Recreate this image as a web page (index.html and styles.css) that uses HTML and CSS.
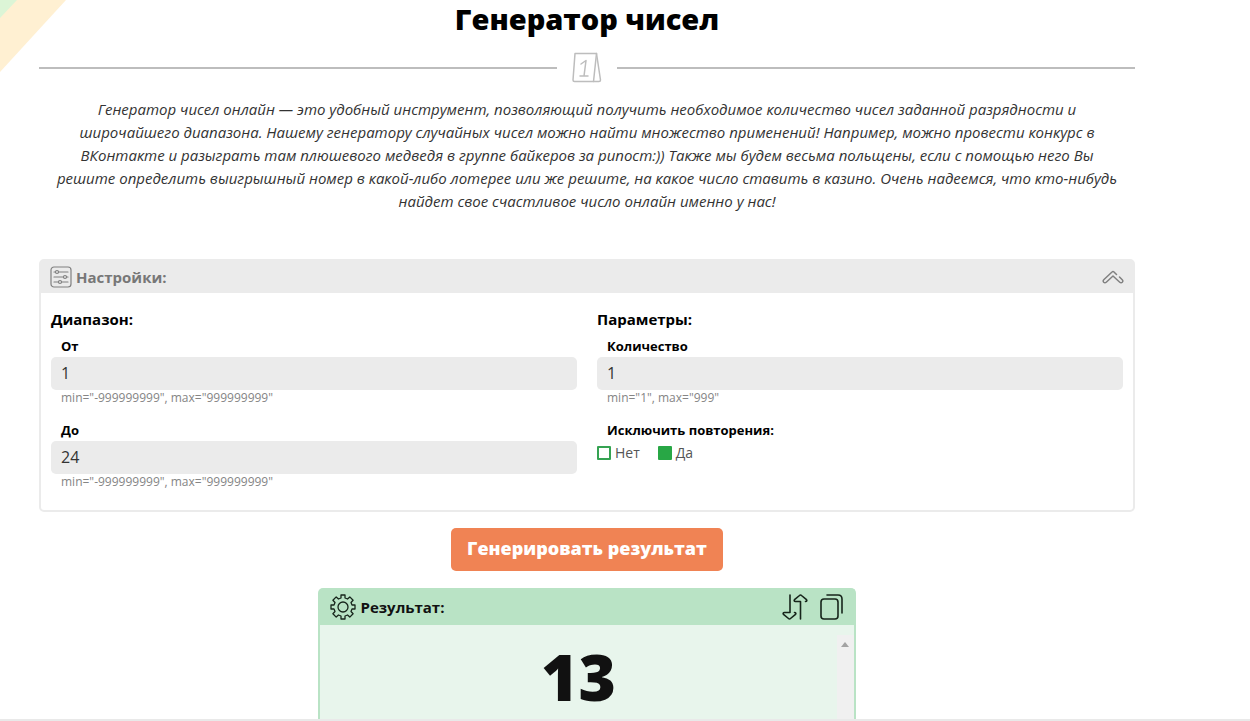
FILE: index.html
```html
<!DOCTYPE html>
<html lang="ru">
<head>
<meta charset="utf-8">
<title>Генератор чисел</title>
<link rel="stylesheet" href="styles.css">
</head>
<body>
<svg class="corner" viewBox="0 0 66 72" aria-hidden="true">
  <path d="M0 0H66L0 72Z" fill="#fff0d2"/>
  <path d="M0 0H17L0 18Z" fill="#dcf5d6"/>
</svg>
<main class="page">
  <h1 class="title">Генератор чисел</h1>
  <div class="divider">
    <svg class="divider-icon" viewBox="0 0 30 32" fill="none" stroke="#bdbdbd" stroke-width="1.5" stroke-linecap="round" stroke-linejoin="round" aria-hidden="true">
      <path d="M3 1.5H24.5L21.5 29.5H2.5Q1 29.5 1 28Z"/>
      <path d="M24.5 1.5L28.5 28Q28.5 29.5 27 29.5H21.5"/>
      <path d="M9 12L14 8.5L12 24M8 24H16"/>
    </svg>
  </div>
  <p class="intro">Генератор чисел онлайн — это удобный инструмент, позволяющий получить необходимое количество чисел заданной разрядности и<br>широчайшего диапазона. Нашему генератору случайных чисел можно найти множество применений! Например, можно провести конкурс в<br>ВКонтакте и разыграть там плюшевого медведя в группе байкеров за рипост:)) Также мы будем весьма польщены, если с помощью него Вы<br>решите определить выигрышный номер в какой-либо лотерее или же решите, на какое число ставить в казино. Очень надеемся, что кто-нибудь<br>найдет свое счастливое число онлайн именно у нас!</p>

  <form class="form">
    <section class="settings">
      <header class="settings-head">
        <svg class="icon-settings" viewBox="0 0 22 22" fill="none" stroke="#808080" stroke-width="1.2" aria-hidden="true">
          <rect x="1" y="1" width="20" height="20" rx="3"/>
          <path d="M4 6H5.500M8.500 6H18M4 11H13.500M16.500 11H18M4 16H8.500M11.500 16H18" stroke-linecap="round"/>
          <circle cx="7" cy="6" r="1.500"/><circle cx="15" cy="11" r="1.500"/><circle cx="10" cy="16" r="1.500"/>
        </svg>
        <h2 class="settings-title">Настройки:</h2>
        <button class="icon-button" type="button" aria-label="Свернуть">
          <svg class="icon-chevron" viewBox="0 0 22 14" fill="none" stroke="#808080" stroke-width="1.5" stroke-linecap="round" stroke-linejoin="round" aria-hidden="true">
            <path d="M14.500 4.500L12 2Q11 1 10 2L2 9.500Q.5 11 1.700 12.300Q3 13.400 4.500 12L11 6L17.500 12Q19 13.400 20.300 12.300Q21.500 11 20 9.500L17.500 7"/>
          </svg>
        </button>
      </header>
      <div class="settings-body">
        <div class="column">
          <h3 class="group-title">Диапазон:</h3>
          <div class="field">
            <label class="label" for="from">От</label>
            <input class="input" id="from" type="text" inputmode="numeric" value="1">
            <small class="hint">min="-999999999", max="999999999"</small>
          </div>
          <div class="field">
            <label class="label" for="to">До</label>
            <input class="input" id="to" type="text" inputmode="numeric" value="24">
            <small class="hint">min="-999999999", max="999999999"</small>
          </div>
        </div>
        <div class="column">
          <h3 class="group-title">Параметры:</h3>
          <div class="field">
            <label class="label" for="count">Количество</label>
            <input class="input" id="count" type="text" inputmode="numeric" value="1">
            <small class="hint">min="1", max="999"</small>
          </div>
          <div class="field" role="radiogroup" aria-labelledby="unique">
            <span class="label" id="unique">Исключить повторения:</span>
            <div class="options">
              <label class="option"><input class="radio" type="radio" name="unique">Нет</label>
              <label class="option"><input class="radio" type="radio" name="unique" checked>Да</label>
            </div>
          </div>
        </div>
      </div>
    </section>
    <button class="generate" type="button">Генерировать результат</button>
  </form>

  <section class="result">
    <header class="result-head">
      <svg class="icon-gear" viewBox="0 0 26 26" fill="none" stroke="#17251b" stroke-width="1.3" stroke-linejoin="round" aria-hidden="true">
        <path d="M11 1H15V4L17.500 5L19.800 2.900L23.100 6.200L21 8.500L22 11H25V15H22L21 17.500L23.100 19.800L19.800 23.100L17.500 21L15 22V25H11V22L8.500 21L6.200 23.100L2.900 19.800L5 17.500L4 15H1V11H4L5 8.500L2.900 6.200L6.200 2.900L8.500 5L11 4Z"/>
        <circle cx="13" cy="13" r="5"/>
      </svg>
      <h2 class="result-title">Результат:</h2>
      <button class="icon-button" type="button" aria-label="Сортировать">
        <svg class="icon-sort" viewBox="0 0 26 26" fill="none" stroke="#17251b" stroke-width="1.600" stroke-linecap="round" stroke-linejoin="round" aria-hidden="true">
          <path d="M8 1V18.500H2.500Q.5 18.800 1.500 20.300L6.500 24.500Q7.500 25.500 8.500 24.500L13.500 20.300Q14.500 18.800 12.500 18.500"/>
          <path d="M18.500 25V7.500H13.500Q11.500 7.200 12.500 5.700L17.500 1.500Q18.500.5 19.500 1.500L24.500 5.700Q25.500 7.200 23.500 7.500"/>
        </svg>
      </button>
      <button class="icon-button" type="button" aria-label="Копировать">
        <svg class="icon-copy" viewBox="0 0 24 26" fill="none" stroke="#17251b" stroke-width="1.600" stroke-linecap="round" aria-hidden="true">
          <rect x="1" y="5" width="17" height="20" rx="3"/>
          <path d="M7 1H18Q22 1 22 5V19"/>
        </svg>
      </button>
    </header>
    <div class="result-body">
      <output class="number">13</output>
      <div class="track"><svg class="track-arrow" viewBox="0 0 8 5" aria-hidden="true"><path d="M0 5L4 0L8 5Z" fill="#a3a3a3"/></svg></div>
    </div>
  </section>
</main>
</body>
</html>
```
FILE: styles.css
```css
* {
  box-sizing: border-box;
}

body {
  margin: 0;
  background: #fff;
  color: #000;
  font-family: "Open Sans", "Noto Sans", sans-serif;
}

h1, h2, h3, p {
  margin: 0;
}

.corner {
  position: absolute;
  top: 0;
  left: 0;
  width: 66px;
}

.page {
  display: flex;
  flex-direction: column;
  height: 100vh;
  padding: 0 115px 0 39px;
  overflow: hidden;
  border-bottom: 2px solid #e9e9e9;
}

.title {
  font-size: 29px;
  line-height: 38px;
  font-weight: 800;
  text-align: center;
}

.divider {
  display: flex;
  align-items: center;
  gap: 15px;
  margin-top: 14px;
}

.divider::before,
.divider::after {
  content: "";
  flex: 1;
  height: 2px;
  background: #bdbdbd;
}

.divider-icon {
  width: 30px;
  height: 32px;
}

.intro {
  margin-top: 14px;
  color: #333;
  font-size: 15px;
  line-height: 23px;
  font-style: italic;
  text-align: center;
  white-space: nowrap;
}

.form {
  display: flex;
  flex-direction: column;
  align-items: center;
  margin-top: 46px;
}

.settings {
  width: 100%;
  border: 2px solid #ebebeb;
  border-radius: 5px;
}

.settings-head {
  display: flex;
  align-items: center;
  gap: 4px;
  height: 32px;
  padding: 0 9px;
  background: #ebebeb;
}

.icon-settings {
  width: 22px;
}

.settings-title {
  flex: 1;
  color: #777;
  font-size: 15px;
  line-height: 22px;
  font-weight: 700;
}

.icon-button {
  display: flex;
  padding: 0;
  border: 0;
  background: none;
}

.icon-chevron {
  width: 22px;
}

.settings-body {
  display: grid;
  grid-template-columns: 1fr 1fr;
  gap: 20px;
  padding: 15px 10px 20px;
}

.group-title {
  margin-bottom: 6px;
  font-size: 15px;
  line-height: 22px;
  font-weight: 700;
}

.field {
  display: flex;
  flex-direction: column;
}

.field + .field {
  margin-top: 14px;
}

.label {
  padding-left: 10px;
  font-size: 13px;
  line-height: 20px;
  font-weight: 700;
}

.input {
  width: 100%;
  height: 33px;
  margin-top: 1px;
  padding: 0 10px 2px;
  border: 0;
  border-radius: 5px;
  background: #ebebeb;
  color: #333;
  font: 16px "Open Sans", "Noto Sans", sans-serif;
}

.hint {
  padding-left: 10px;
  color: #858585;
  font-size: 12px;
  line-height: 16px;
}

.options {
  display: flex;
  gap: 18px;
  padding-top: 3px;
}

.option {
  display: flex;
  align-items: center;
  gap: 4px;
  color: #555;
  font-size: 14px;
  line-height: 20px;
}

.radio {
  width: 14px;
  height: 14px;
  margin: 0;
  border: 2px solid #35a352;
  border-radius: 1px;
  appearance: none;
}

.radio:checked {
  background: #28a745;
  border-color: #28a745;
}

.generate {
  margin: 16px 0 17px;
  padding: 7px 16px 9px;
  border: 0;
  border-radius: 5px;
  background: #f08354;
  color: #fff;
  font: 800 18px/27px "Open Sans", "Noto Sans", sans-serif;
}

.result {
  display: flex;
  flex-direction: column;
  flex: 1;
  align-self: center;
  width: 49%;
  border: 2px solid #b9e3c5;
  border-bottom: 0;
  border-radius: 5px 5px 0 0;
  background: #e8f5ec;
}

.result-head {
  display: flex;
  flex: none;
  align-items: center;
  gap: 12px;
  height: 35px;
  padding: 0 10px 2px;
  background: #b9e3c5;
}

.icon-gear,
.icon-sort {
  width: 26px;
}

.icon-copy {
  width: 24px;
}

.result-title {
  flex: 1;
  margin-left: -8px;
  color: #111;
  font-size: 15px;
  font-weight: 700;
}

.result-body {
  display: flex;
  flex: 1;
  padding-top: 10px;
}

.number {
  flex: 1;
  color: #111;
  font-size: 64px;
  line-height: 84px;
  font-weight: 800;
  text-align: center;
}

.track {
  display: flex;
  justify-content: center;
  width: 17px;
  padding-top: 7px;
  background: #f0f0f0;
}

.track-arrow {
  width: 8px;
  height: 5px;
}
```
